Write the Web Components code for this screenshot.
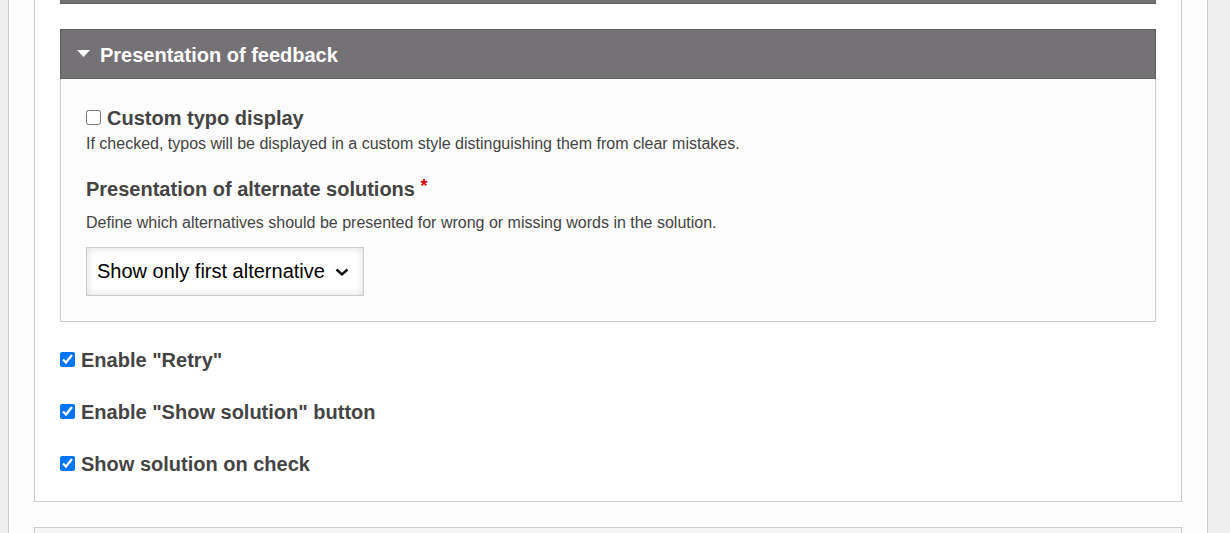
<!DOCTYPE html>
<html lang="en">
<head>
<meta charset="utf-8">
<title>Behavioural settings</title>
<style>
  html, body { height: 100%; }
  body { margin: 0; background: #efefef; color: #444; font: 20px/24px "Liberation Sans", Arial, sans-serif; overflow: hidden; }
</style>
</head>
<body>
<settings-page>
  <settings-panel>
    <field-group collapsed></field-group>
    <field-group heading="Presentation of feedback">
      <check-field label="Custom typo display" description="If checked, typos will be displayed in a custom style distinguishing them from clear mistakes."></check-field>
      <select-field label="Presentation of alternate solutions" description="Define which alternatives should be presented for wrong or missing words in the solution." option="Show only first alternative"></select-field>
    </field-group>
    <check-field label='Enable "Retry"' checked></check-field>
    <check-field label='Enable "Show solution" button' checked></check-field>
    <check-field label="Show solution on check" checked></check-field>
  </settings-panel>
  <next-panel></next-panel>
</settings-page>

<script>
  class BaseElement extends HTMLElement {
    connectedCallback() {
      if (this.shadowRoot) return;
      this.attachShadow({ mode: "open" }).innerHTML = this.render();
      this.fill(this.shadowRoot);
    }
    fill(root) {
      for (const node of root.querySelectorAll("[data-text]")) {
        const text = this.getAttribute(node.dataset.text);
        if (text) node.textContent = text; else node.remove();
      }
    }
  }

  customElements.define("settings-page", class extends BaseElement {
    render() {
      return `<style>
        :host { display: flex; flex-direction: column; gap: 25px; box-sizing: border-box; min-height: 100vh;
          margin: 0 22px 0 8px; padding: 0 25px; background: #fcfcfc; border: solid #ccc; border-width: 0 1px; }
      </style><slot></slot>`;
    }
  });

  customElements.define("settings-panel", class extends BaseElement {
    render() {
      return `<style>
        :host { display: flex; flex-direction: column; gap: 25px; padding: 0 25px 23px;
          background: #fff; border: 1px solid #ccc; border-top: 0; }
      </style><slot></slot>`;
    }
  });

  customElements.define("next-panel", class extends BaseElement {
    render() {
      return `<style>
        :host { display: block; flex: 1; background: #f5f5f5; border: 1px solid #ccc; border-bottom: 0; }
      </style>`;
    }
  });

  customElements.define("field-group", class extends BaseElement {
    render() {
      const css = `<style>
        :host { display: block; }
        .bar { box-sizing: border-box; width: 100%; display: flex; align-items: center; gap: 10px; margin: 0;
          padding: 13px 16px 11px; background: #757275; border: 1px solid #5f5f5f; color: #fff;
          font: bold 20px/24px "Liberation Sans", Arial, sans-serif; text-align: left; }
        .edge { height: 4px; padding: 0; border-top: 0; }
        svg { display: block; width: 13px; height: 10px; }
        .content { display: flex; flex-direction: column; gap: 21px; padding: 26px 25px 25px;
          background: #fcfcfc; border: 1px solid #ccc; border-top: 0; }
      </style>`;
      if (this.hasAttribute("collapsed")) return css + `<div class="bar edge"></div>`;
      return css + `<button class="bar" type="button" aria-expanded="true">
          <svg viewBox="0 0 13 10" aria-hidden="true"><path d="M0 0h13L6.500 7z" fill="#fff"/></svg>
          <span data-text="heading"></span>
        </button>
        <div class="content"><slot></slot></div>`;
    }
  });

  customElements.define("check-field", class extends BaseElement {
    render() {
      return `<style>
        :host { display: block; }
        label { display: flex; align-items: center; gap: 6px; font-weight: bold; line-height: 27px; }
        input { width: 15px; height: 15px; margin: 0 0 3px; }
        p { margin: 0; font-size: 16px; line-height: 24px; }
      </style>
      <label><input type="checkbox" ${this.hasAttribute("checked") ? "checked" : ""}><span data-text="label"></span></label>
      <p data-text="description"></p>`;
    }
  });

  customElements.define("select-field", class extends BaseElement {
    render() {
      return `<style>
        :host { display: block; }
        label { display: block; font-weight: bold; line-height: 24px; }
        .required { color: #d00; font-size: 18px; vertical-align: 4px; line-height: 1; }
        p { margin: 10px 0 12px; font-size: 16px; line-height: 24px; }
        .box { display: inline-grid; align-items: center; vertical-align: top; }
        select, svg { grid-area: 1 / 1; }
        select { appearance: none; margin: 0; padding: 11px 38px 12px 10px; border: 1px solid #ccc; border-radius: 0;
          background: #fff; color: #000; box-shadow: inset 0 0 8px #ddd;
          font: 20px/24px "Liberation Sans", Arial, sans-serif; }
        svg { justify-self: end; width: 14px; height: 10px; margin-right: 15px; pointer-events: none; }
      </style>
      <label for="choice"><span data-text="label"></span> <span class="required">*</span></label>
      <p data-text="description"></p>
      <div class="box">
        <select id="choice"><option data-text="option"></option></select>
        <svg viewBox="0 0 14 10" aria-hidden="true"><path d="M1.500 2.500 7 7.500l5.500-5" fill="none" stroke="#111" stroke-width="2.400"/></svg>
      </div>`;
    }
  });
</script>
</body>
</html>
